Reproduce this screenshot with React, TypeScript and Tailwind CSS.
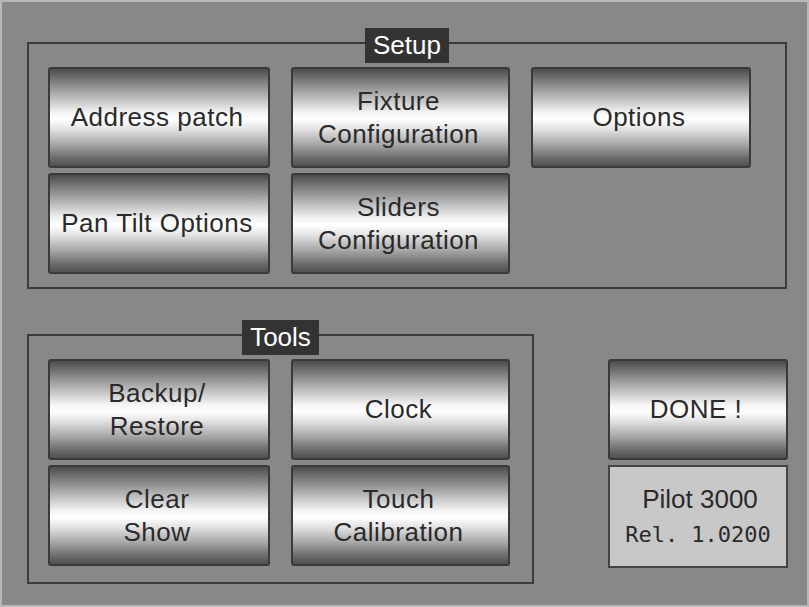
import React from "react";

const chrome =
    "bg-[linear-gradient(to_bottom,#4c4c4c_0%,#7a7a7a_12%,#bdbdbd_30%,#f4f4f4_45%,#ffffff_52%,#e2e2e2_62%,#a6a6a6_78%,#6a6a6a_92%,#505050_100%)]";

function Btn({label, w}: { label: React.ReactNode, w: string }) {
    return (
        <div
            className={`${w} h-[101px] ${chrome} border-2 border-[#3a3a3a] rounded-[3px] flex items-center justify-center text-center text-[26px] leading-[33px] tracking-[0.5px] text-[#2a2a2a] pr-[4px]`}>
            <span>{label}</span>
        </div>
    );
}

function Group({title, children, className}: { title: string, children: React.ReactNode, className: string }) {
    return (
        <div className={`relative border-2 border-[#3c3c3c] ${className}`}>
            <div className="absolute left-0 right-0 -top-[16px] flex justify-center">
                <span className="bg-[#333] text-white text-[26px] leading-[35px] px-[8px]">{title}</span>
            </div>
            {children}
        </div>
    );
}

export default function App() {
    return (
        <div className="w-[809px] h-[607px] bg-[#888888] border-2 border-[#b8b8b8] pl-[25px] pt-[40px] font-['Liberation_Sans',Arial,sans-serif]">
            <Group title="Setup" className="w-[760px] h-[247px] pl-[19px] pt-[23px]">
                <div className="flex gap-x-[21px]">
                    <div className="flex flex-col gap-[5px]">
                        <Btn w="w-[222px]" label="Address patch"/>
                        <Btn w="w-[222px]" label="Pan Tilt Options"/>
                    </div>
                    <div className="flex flex-col gap-[5px]">
                        <Btn w="w-[219px]" label={<>Fixture<br/>Configuration</>}/>
                        <Btn w="w-[219px]" label={<>Sliders<br/>Configuration</>}/>
                    </div>
                    <div className="flex flex-col">
                        <Btn w="w-[220px]" label="Options"/>
                    </div>
                </div>
            </Group>

            <div className="flex items-start mt-[45px]">
                <Group title="Tools" className="w-[507px] h-[250px] pl-[19px] pt-[23px]">
                    <div className="flex gap-x-[21px]">
                        <div className="flex flex-col gap-[5px]">
                            <Btn w="w-[222px]" label={<>Backup/<br/>Restore</>}/>
                            <Btn w="w-[222px]" label={<>Clear<br/>Show</>}/>
                        </div>
                        <div className="flex flex-col gap-[5px]">
                            <Btn w="w-[219px]" label="Clock"/>
                            <Btn w="w-[219px]" label={<>Touch<br/>Calibration</>}/>
                        </div>
                    </div>
                </Group>
                <div className="ml-[74px] mt-[25px] flex flex-col gap-[5px]">
                    <Btn w="w-[180px]" label="DONE !"/>
                    <div className="w-[180px] h-[103px] bg-[#c8c8c8] border-2 border-[#444] flex flex-col items-center justify-center text-[#2a2a2a]">
                        <span className="text-[26px] leading-[34px] pl-[4px]">Pilot 3000</span>
                        <span className="text-[22px] leading-[34px] pt-[2px] font-['DejaVu_Sans_Mono',monospace]">Rel. 1.0200</span>
                    </div>
                </div>
            </div>
        </div>
    );
}
